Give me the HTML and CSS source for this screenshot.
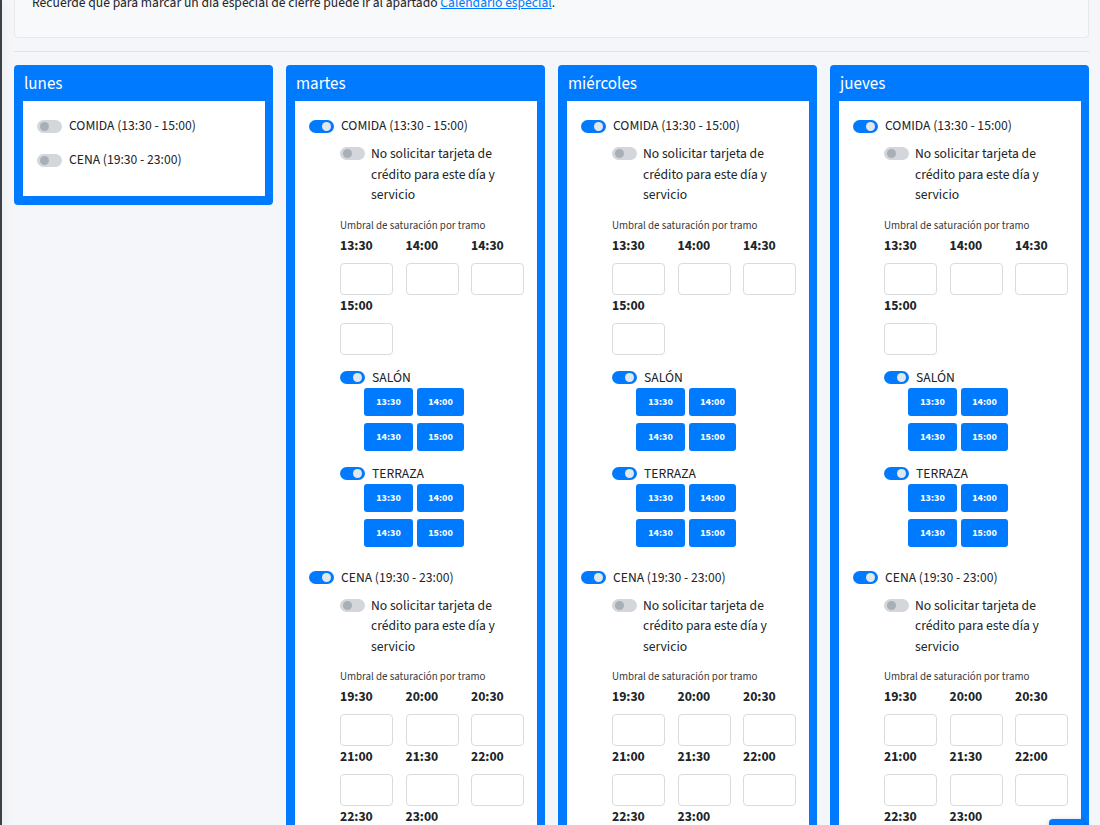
FILE: index.html
```html
<!DOCTYPE html>
<html lang="es">
<head>
<meta charset="utf-8">
<title>Horarios</title>
<link rel="stylesheet" href="styles.css">
</head>
<body>
<div class="layout">
  <aside class="sidebar"></aside>
  <main class="content">
    <div class="callout">Recuerde que para marcar un día especial de cierre puede ir al apartado <a href="#">Calendario especial</a>.</div>
    <hr class="divider">
    <div class="days">
      <section class="day">
        <h3 class="day-title">lunes</h3>
        <div class="day-body">
          <div class="service">
            <label class="switch-row"><span class="switch"></span>COMIDA (13:30 - 15:00)</label>
          </div>
          <div class="service">
            <label class="switch-row"><span class="switch"></span>CENA (19:30 - 23:00)</label>
          </div>
        </div>
      </section>

      <section class="day">
        <h3 class="day-title">martes</h3>
        <div class="day-body">
          <div class="service">
            <label class="switch-row"><span class="switch on"></span>COMIDA (13:30 - 15:00)</label>
            <div class="service-detail">
              <label class="switch-row credit"><span class="switch"></span><span class="credit-text">No solicitar tarjeta de crédito para este día y servicio</span></label>
              <div class="umbral">Umbral de saturación por tramo</div>
              <div class="slots">
                <div class="slot"><span class="slot-label">13:30</span><input class="slot-input" type="text"></div>
                <div class="slot"><span class="slot-label">14:00</span><input class="slot-input" type="text"></div>
                <div class="slot"><span class="slot-label">14:30</span><input class="slot-input" type="text"></div>
                <div class="slot"><span class="slot-label">15:00</span><input class="slot-input" type="text"></div>
              </div>
              <div class="zone">
                <label class="switch-row"><span class="switch on"></span>SALÓN</label>
                <div class="zone-times"><span class="time-btn">13:30</span><span class="time-btn">14:00</span><span class="time-btn">14:30</span><span class="time-btn">15:00</span></div>
              </div>
              <div class="zone">
                <label class="switch-row"><span class="switch on"></span>TERRAZA</label>
                <div class="zone-times"><span class="time-btn">13:30</span><span class="time-btn">14:00</span><span class="time-btn">14:30</span><span class="time-btn">15:00</span></div>
              </div>
            </div>
          </div>
          <div class="service">
            <label class="switch-row"><span class="switch on"></span>CENA (19:30 - 23:00)</label>
            <div class="service-detail">
              <label class="switch-row credit"><span class="switch"></span><span class="credit-text">No solicitar tarjeta de crédito para este día y servicio</span></label>
              <div class="umbral">Umbral de saturación por tramo</div>
              <div class="slots">
                <div class="slot"><span class="slot-label">19:30</span><input class="slot-input" type="text"></div>
                <div class="slot"><span class="slot-label">20:00</span><input class="slot-input" type="text"></div>
                <div class="slot"><span class="slot-label">20:30</span><input class="slot-input" type="text"></div>
                <div class="slot"><span class="slot-label">21:00</span><input class="slot-input" type="text"></div>
                <div class="slot"><span class="slot-label">21:30</span><input class="slot-input" type="text"></div>
                <div class="slot"><span class="slot-label">22:00</span><input class="slot-input" type="text"></div>
                <div class="slot"><span class="slot-label">22:30</span><input class="slot-input" type="text"></div>
                <div class="slot"><span class="slot-label">23:00</span><input class="slot-input" type="text"></div>
              </div>
            </div>
          </div>
        </div>
      </section>

      <section class="day">
        <h3 class="day-title">miércoles</h3>
        <div class="day-body">
          <div class="service">
            <label class="switch-row"><span class="switch on"></span>COMIDA (13:30 - 15:00)</label>
            <div class="service-detail">
              <label class="switch-row credit"><span class="switch"></span><span class="credit-text">No solicitar tarjeta de crédito para este día y servicio</span></label>
              <div class="umbral">Umbral de saturación por tramo</div>
              <div class="slots">
                <div class="slot"><span class="slot-label">13:30</span><input class="slot-input" type="text"></div>
                <div class="slot"><span class="slot-label">14:00</span><input class="slot-input" type="text"></div>
                <div class="slot"><span class="slot-label">14:30</span><input class="slot-input" type="text"></div>
                <div class="slot"><span class="slot-label">15:00</span><input class="slot-input" type="text"></div>
              </div>
              <div class="zone">
                <label class="switch-row"><span class="switch on"></span>SALÓN</label>
                <div class="zone-times"><span class="time-btn">13:30</span><span class="time-btn">14:00</span><span class="time-btn">14:30</span><span class="time-btn">15:00</span></div>
              </div>
              <div class="zone">
                <label class="switch-row"><span class="switch on"></span>TERRAZA</label>
                <div class="zone-times"><span class="time-btn">13:30</span><span class="time-btn">14:00</span><span class="time-btn">14:30</span><span class="time-btn">15:00</span></div>
              </div>
            </div>
          </div>
          <div class="service">
            <label class="switch-row"><span class="switch on"></span>CENA (19:30 - 23:00)</label>
            <div class="service-detail">
              <label class="switch-row credit"><span class="switch"></span><span class="credit-text">No solicitar tarjeta de crédito para este día y servicio</span></label>
              <div class="umbral">Umbral de saturación por tramo</div>
              <div class="slots">
                <div class="slot"><span class="slot-label">19:30</span><input class="slot-input" type="text"></div>
                <div class="slot"><span class="slot-label">20:00</span><input class="slot-input" type="text"></div>
                <div class="slot"><span class="slot-label">20:30</span><input class="slot-input" type="text"></div>
                <div class="slot"><span class="slot-label">21:00</span><input class="slot-input" type="text"></div>
                <div class="slot"><span class="slot-label">21:30</span><input class="slot-input" type="text"></div>
                <div class="slot"><span class="slot-label">22:00</span><input class="slot-input" type="text"></div>
                <div class="slot"><span class="slot-label">22:30</span><input class="slot-input" type="text"></div>
                <div class="slot"><span class="slot-label">23:00</span><input class="slot-input" type="text"></div>
              </div>
            </div>
          </div>
        </div>
      </section>

      <section class="day">
        <h3 class="day-title">jueves</h3>
        <div class="day-body">
          <div class="service">
            <label class="switch-row"><span class="switch on"></span>COMIDA (13:30 - 15:00)</label>
            <div class="service-detail">
              <label class="switch-row credit"><span class="switch"></span><span class="credit-text">No solicitar tarjeta de crédito para este día y servicio</span></label>
              <div class="umbral">Umbral de saturación por tramo</div>
              <div class="slots">
                <div class="slot"><span class="slot-label">13:30</span><input class="slot-input" type="text"></div>
                <div class="slot"><span class="slot-label">14:00</span><input class="slot-input" type="text"></div>
                <div class="slot"><span class="slot-label">14:30</span><input class="slot-input" type="text"></div>
                <div class="slot"><span class="slot-label">15:00</span><input class="slot-input" type="text"></div>
              </div>
              <div class="zone">
                <label class="switch-row"><span class="switch on"></span>SALÓN</label>
                <div class="zone-times"><span class="time-btn">13:30</span><span class="time-btn">14:00</span><span class="time-btn">14:30</span><span class="time-btn">15:00</span></div>
              </div>
              <div class="zone">
                <label class="switch-row"><span class="switch on"></span>TERRAZA</label>
                <div class="zone-times"><span class="time-btn">13:30</span><span class="time-btn">14:00</span><span class="time-btn">14:30</span><span class="time-btn">15:00</span></div>
              </div>
            </div>
          </div>
          <div class="service">
            <label class="switch-row"><span class="switch on"></span>CENA (19:30 - 23:00)</label>
            <div class="service-detail">
              <label class="switch-row credit"><span class="switch"></span><span class="credit-text">No solicitar tarjeta de crédito para este día y servicio</span></label>
              <div class="umbral">Umbral de saturación por tramo</div>
              <div class="slots">
                <div class="slot"><span class="slot-label">19:30</span><input class="slot-input" type="text"></div>
                <div class="slot"><span class="slot-label">20:00</span><input class="slot-input" type="text"></div>
                <div class="slot"><span class="slot-label">20:30</span><input class="slot-input" type="text"></div>
                <div class="slot"><span class="slot-label">21:00</span><input class="slot-input" type="text"></div>
                <div class="slot"><span class="slot-label">21:30</span><input class="slot-input" type="text"></div>
                <div class="slot"><span class="slot-label">22:00</span><input class="slot-input" type="text"></div>
                <div class="slot"><span class="slot-label">22:30</span><input class="slot-input" type="text"></div>
                <div class="slot"><span class="slot-label">23:00</span><input class="slot-input" type="text"></div>
              </div>
            </div>
          </div>
        </div>
      </section>
    </div>
  </main>
</div>
<a class="to-top" href="#" aria-label="Subir"></a>
</body>
</html>
```
FILE: styles.css
```css
html, body {
  margin: 0;
  padding: 0;
  background: #f4f6f9;
  font-family: "Source Sans Pro", "Source Sans 3", Lato, "Liberation Sans", sans-serif;
  color: #212529;
  overflow: hidden;
}

.layout {
  display: flex;
  min-height: 100vh;
}

.sidebar {
  flex: 0 0 2px;
  background: #3a4047;
  box-shadow: 2px 0 10px rgba(0, 0, 0, 0.12);
  position: relative;
  z-index: 2;
}

.content {
  flex: 1;
  padding: 0 11px 0 12px;
  margin-top: -23px;
}

.callout {
  background: #f8f9fa;
  border: 1px solid #e6e8eb;
  border-radius: 4px;
  padding: 15px 17px 24px;
  font-size: 13.6px;
  line-height: 20px;
}

.callout a {
  color: #007bff;
  text-decoration: underline;
}

.divider {
  border: 0;
  border-top: 1px solid #dfe2e6;
  margin: 13px 0 13px;
}

.days {
  display: grid;
  grid-template-columns: repeat(4, 259px);
  column-gap: 13px;
  align-items: start;
}

.day {
  background: #007bff;
  border-radius: 4px;
  padding: 0 8px 9px 9px;
}

.day-title {
  margin: 0;
  height: 36px;
  line-height: 39px;
  padding-left: 1px;
  color: #fff;
  font-size: 17px;
  font-weight: 400;
}

.day-body {
  background: #fff;
  padding: 15px 13px 12px 14px;
}

.service {
  margin-bottom: 14px;
}

.switch-row {
  display: flex;
  align-items: center;
  gap: 7px;
  font-size: 13.6px;
  line-height: 20px;
}

.switch {
  flex: 0 0 25px;
  height: 13px;
  border-radius: 7px;
  background: #d3d7db;
  position: relative;
}

.switch::after {
  content: "";
  position: absolute;
  top: 2px;
  left: 3px;
  width: 9px;
  height: 9px;
  border-radius: 50%;
  background: #a9afb6;
}

.switch.on {
  background: #007bff;
}

.switch.on::after {
  left: 13px;
  background: #e4e7ea;
}

.service-detail {
  margin: 8px 0 0 31px;
  padding-bottom: 7px;
}

.switch-row.credit {
  align-items: flex-start;
  gap: 6px;
  line-height: 20.5px;
}

.switch-row.credit .switch {
  margin-top: 3px;
}

.credit-text {
  width: 150px;
}

.umbral {
  margin-top: 12px;
  font-size: 10.9px;
  line-height: 16px;
  color: #343a40;
}

.slots {
  margin-top: 1px;
  display: grid;
  grid-template-columns: repeat(3, 53px);
  column-gap: 12.5px;
  row-gap: 0;
}

.slot {
  display: flex;
  flex-direction: column;
}

.slot-label {
  font-size: 13.6px;
  font-weight: 700;
  line-height: 21px;
  white-space: nowrap;
}

.slot-input {
  margin-top: 7px;
  box-sizing: border-box;
  width: 53px;
  height: 32px;
  border: 1px solid #d8dce1;
  border-radius: 4px;
  background: #fff;
  padding: 0;
}

.zone {
  margin-top: 13px;
}

.zone-times {
  margin-left: 24px;
  display: grid;
  grid-template-columns: 49px 47px;
  column-gap: 4px;
  row-gap: 7px;
}

.time-btn {
  height: 28px;
  line-height: 28px;
  border-radius: 3px;
  background: #007bff;
  color: #fff;
  font-size: 10.2px;
  font-weight: 700;
  text-align: center;
}

.to-top {
  position: fixed;
  right: 16px;
  top: 819px;
  width: 35px;
  height: 40px;
  background: #007bff;
  border-radius: 4px;
  box-shadow: 0 2px 6px rgba(0, 0, 0, 0.25);
}
```
